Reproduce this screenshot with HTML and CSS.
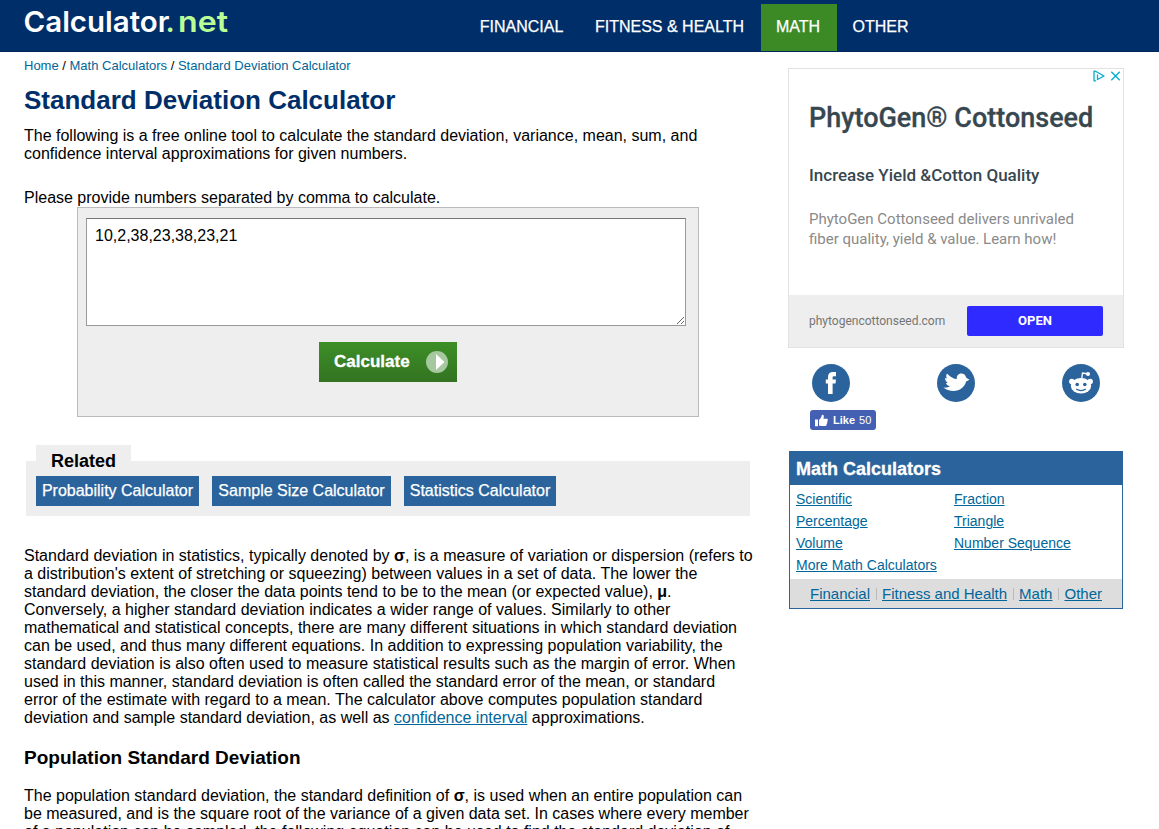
FILE: index.html
```html
<!DOCTYPE html>
<html lang="en">
<head>
<meta charset="utf-8">
<title>Standard Deviation Calculator</title>
<link rel="stylesheet" href="styles.css">
</head>
<body>
<header class="header">
  <svg class="logo" width="210" height="40" viewBox="0 0 210 40">
    <text x="-0.500" y="31.500" textLength="146" lengthAdjust="spacingAndGlyphs" class="logo-main">Calculator</text>
    <text x="141.500" y="31.500" class="logo-net">.</text>
    <text x="154" y="31.500" textLength="50" lengthAdjust="spacingAndGlyphs" class="logo-net">net</text>
  </svg>
  <nav class="nav">
    <a class="w1"><span>FINANCIAL</span></a><a class="w2"><span>FITNESS &amp; HEALTH</span></a><a class="w3 on"><span>MATH</span></a><a class="w4"><span>OTHER</span></a>
  </nav>
</header>
<div class="page">
  <main class="content">
    <div class="crumbs"><a>Home</a> / <a>Math Calculators</a> / <a>Standard Deviation Calculator</a></div>
    <h1>Standard Deviation Calculator</h1>
    <p class="intro">The following is a free online tool to calculate the standard deviation, variance, mean, sum, and<br>confidence interval approximations for given numbers.</p>
    <p class="prompt">Please provide numbers separated by comma to calculate.</p>
    <form class="panel">
      <textarea>10,2,38,23,38,23,21</textarea>
      <button type="button" class="calc"><span>Calculate</span>
        <svg width="22" height="22" viewBox="0 0 22 22"><circle cx="11" cy="11" r="11" fill="#a6c89f"/><path d="M10 3 18.500 11 10 19z" fill="#fff"/></svg>
      </button>
    </form>
    <section class="related">
      <div class="related-tab">Related</div>
      <div class="related-body"><a class="r1">Probability Calculator</a><a class="r2">Sample Size Calculator</a><a class="r3">Statistics Calculator</a></div>
    </section>
    <p class="article">Standard deviation in statistics, typically denoted by <b>σ</b>, is a measure of variation or dispersion (refers to<br>a distribution's extent of stretching or squeezing) between values in a set of data. The lower the<br>standard deviation, the closer the data points tend to be to the mean (or expected value), <b>μ</b>.<br>Conversely, a higher standard deviation indicates a wider range of values. Similarly to other<br>mathematical and statistical concepts, there are many different situations in which standard deviation<br>can be used, and thus many different equations. In addition to expressing population variability, the<br>standard deviation is also often used to measure statistical results such as the margin of error. When<br>used in this manner, standard deviation is often called the standard error of the mean, or standard<br>error of the estimate with regard to a mean. The calculator above computes population standard<br>deviation and sample standard deviation, as well as <a>confidence interval</a> approximations.</p>
    <h2>Population Standard Deviation</h2>
    <p class="article">The population standard deviation, the standard definition of <b>σ</b>, is used when an entire population can<br>be measured, and is the square root of the variance of a given data set. In cases where every member<br>of a population can be sampled, the following equation can be used to find the standard deviation of</p>
  </main>
  <aside class="side">
    <div class="ad">
      <div class="ad-marks">
        <svg width="28" height="12" viewBox="0 0 28 12" fill="none" stroke="#00aecd" stroke-width="1.300"><path d="M3.200 10.800H1V1.200h1.500L11 6 4.500 9.500V4.500" stroke-linejoin="round"/><path d="M18.300 1.800l8.400 8.400M26.700 1.800l-8.400 8.400"/></svg>
      </div>
      <div class="ad-title">PhytoGen® Cottonseed</div>
      <div class="ad-sub">Increase Yield &amp;Cotton Quality</div>
      <div class="ad-text">PhytoGen Cottonseed delivers unrivaled<br>fiber quality, yield &amp; value. Learn how!</div>
      <div class="ad-foot"><span>phytogencottonseed.com</span><a class="open">OPEN</a></div>
    </div>
    <div class="social">
      <svg width="38" height="38" viewBox="0 0 38 38"><circle cx="19" cy="19" r="19" fill="#2b649c"/><path d="M16 30V19.500h-2.200v-4H16v-2.800C16 9.700 17.800 8 21 8h3v4.300h-2c-1 0-1.400.4-1.400 1.300v1.900H24l-.5 4h-2.900V30z" fill="#fff"/></svg>
      <svg width="38" height="38" viewBox="0 0 38 38"><circle cx="19" cy="19" r="19" fill="#2b649c"/><path d="M6.500 23.500c2.600.4 4.800-.1 6.500-1.300-2.100-.4-3.400-1.600-4-3.300h1.700C9 17.500 7.800 15.500 8.200 13.700c.7.4 1.300.6 1.900.6-1.300-1.300-1-3-.1-4.800 2.500 2.800 6.500 5.500 9.800 5.500-.4-3.300 1.600-5.600 4.400-5.600 1.500 0 2.800.5 3.700 1.500l1.600 3 3 1.800-3.400 1.800C27.800 22.800 22.800 27 16.500 27c-3.800 0-7.500-1.200-10-3.500z" fill="#fff"/></svg>
      <svg width="38" height="38" viewBox="0 0 38 38"><circle cx="19" cy="19" r="19" fill="#2b649c"/><path d="M19.700 15 20.500 9l6 1" fill="none" stroke="#fff" stroke-width="1.300"/><circle cx="26" cy="10" r="2" fill="#fff"/><circle cx="9.800" cy="17.400" r="2.700" fill="#fff"/><circle cx="28.200" cy="17.400" r="2.700" fill="#fff"/><ellipse cx="19" cy="21.700" rx="10.200" ry="7.800" fill="#fff"/><circle cx="15.200" cy="20.500" r="1.800" fill="#2b649c"/><circle cx="22.800" cy="20.500" r="1.800" fill="#2b649c"/><path d="M14.200 25q4.800 3.200 9.600 0" fill="none" stroke="#2b649c" stroke-width="1.300"/></svg>
    </div>
    <div class="like"><svg width="13" height="13" viewBox="0 0 13 13" fill="#fff"><path d="M0 5.500h3V12.300H0zM4 6l2-2.300C6.500 3 6.500 1.500 7 .7 8.500.4 9 1.500 8.800 3L8.400 4.800h3.300c1.300 0 1.500 1.400.6 1.900.6.700.4 1.500-.3 1.800.4.8.1 1.500-.5 1.700.2 1.100-.3 1.700-1.500 1.700H6L4 11.400z"/></svg><b>Like</b><span>50</span></div>
    <section class="mathbox">
      <h3>Math Calculators</h3>
      <div class="links"><a>Scientific</a><a>Fraction</a><a>Percentage</a><a>Triangle</a><a>Volume</a><a>Number Sequence</a><a class="more">More Math Calculators</a></div>
      <div class="cats"><a>Financial</a><i></i><a>Fitness and Health</a><i></i><a>Math</a><i></i><a>Other</a></div>
    </section>
  </aside>
</div>
</body>
</html>
```
FILE: styles.css
```css
* { box-sizing: border-box; }
html, body { height: 829px; overflow: hidden; }
body { margin: 0; background: #fff; color: #000; font: 16px/18px "Liberation Sans", Arial, sans-serif; }
p, h1, h2, h3 { margin: 0; }
.header { height: 52px; background: #002e69; border-bottom: 1px solid #00265a; display: flex; padding-left: 24px; }
.logo { flex: none; }
.logo text { font-family: Inter, sans-serif; font-size: 29px; font-weight: 600; }
.logo-main { fill: #fff; }
.logo-net { fill: #b9ff96; }
.nav { display: flex; height: 47px; margin: 4px 0 0 231px; color: #fff; line-height: 45px; -webkit-text-stroke: 0.25px #fff; }
.nav a { text-align: center; white-space: nowrap; }
.w1 { width: 113px; }
.w2 { width: 183px; }
.w3 { width: 76px; }
.w4 { width: 87px; }
.nav .w3 { padding-right: 2px; }
.on { background: #3b8a26; }
.page { display: flex; }
.content { width: 728px; margin-left: 24px; flex: none; white-space: nowrap; }
.crumbs { font-size: 13px; line-height: 16px; margin-top: 6px; }
a { color: inherit; }
.crumbs a, .article a, .links a, .cats a { color: #069; }
h1 { font-size: 26px; line-height: 30px; color: #002e69; margin-top: 11px; }
.intro { margin-top: 12px; }
.prompt { margin-top: 26px; }
.panel { margin-left: 53px; width: 622px; height: 210px; background: #eee; border: 1px solid #bbb; padding: 10px 8px; }
textarea { display: block; width: 600px; height: 108px; border: 1px solid #999; border-top-color: #777; padding: 8px; background: #fff; font: 16px/18px "Liberation Sans", Arial, sans-serif; color: #000; outline: 0; }
.calc { display: flex; align-items: center; justify-content: space-between; width: 138px; height: 40px; margin: 16px 0 0 233px; padding: 0 9px 0 15px; border: 0; background: linear-gradient(#3d8e27, #337321); color: #fff; font: bold 17px "Liberation Sans", Arial, sans-serif; -webkit-text-stroke: 0.3px #fff; }
.related { margin: 28px 0 0 2px; width: 724px; }
.related-tab { margin-left: 10px; width: 95px; height: 16px; background: #eee; font-weight: bold; font-size: 18px; line-height: 32px; padding-left: 15px; position: relative; }
.related-body { background: #eee; height: 55px; padding: 15px 10px; display: flex; gap: 13px; }
.related-body a { background: #2b649c; color: #fff; height: 30px; line-height: 30px; text-align: center; -webkit-text-stroke: 0.25px #fff; }
.r1 { width: 163px; }
.r2 { width: 179px; }
.r3 { width: 152px; }
.article { margin-top: 31px; }
.article a, .links a, .cats a { text-decoration: underline; }
h2 { font-size: 19px; line-height: 22px; margin-top: 20px; }
h2 + .article { margin-top: 18px; }
.side { width: 336px; margin: 16px 0 0 36px; white-space: nowrap; flex: none; }
.ad { height: 280px; border: 1px solid #e2e2e2; font-family: Roboto, sans-serif; display: flex; flex-direction: column; }
.ad-marks { display: flex; justify-content: flex-end; padding: 1px 2px 0 0; height: 14px; }
.ad-title { margin: 17px 0 0 20px; font-size: 27px; line-height: 36px; font-weight: 500; color: #37474f; -webkit-text-stroke: 0.3px #37474f; }
.ad-sub { margin: 29px 0 0 20px; font-size: 17px; line-height: 20px; font-weight: 500; color: #37474f; }
.ad-text { margin: 24px 0 0 20px; font-size: 15px; line-height: 20px; color: #8a8a8a; }
.ad-foot { margin-top: auto; height: 52px; background: #eee; display: flex; align-items: center; justify-content: space-between; padding: 0 20px; font-size: 12px; color: #757575; }
.open { width: 136px; height: 30px; background: #2f2aff; border-radius: 2px; color: #fff; font-weight: 700; font-size: 13px; line-height: 30px; text-align: center; }
.social { display: flex; justify-content: space-between; padding: 0 24px; margin-top: 16px; height: 38px; }
.like { margin: 8px 0 0 22px; width: 66px; height: 20px; border-radius: 3px; background: #4460b2; color: #fff; display: flex; align-items: center; font-size: 11px; padding-left: 5px; }
.like b { margin: 0 4px 0 5px; }
.mathbox { margin: 21px 0 0 1px; width: 334px; height: 158px; border: 1px solid #2b649c; }
.mathbox h3 { height: 33px; background: #2b649c; color: #fff; font-size: 18px; line-height: 34px; padding-left: 6px; -webkit-text-stroke: 0.3px #fff; }
.links { display: grid; grid-template-columns: 158px 1fr; grid-auto-rows: 22px; padding: 4px 6px 3px; line-height: 21px; font-size: 14px; height: 94px; }
.more { grid-column: span 2; }
.cats { background: #ddd; height: 29px; display: flex; align-items: center; justify-content: center; font-size: 15px; }
.cats i { width: 1px; height: 12px; margin: 0 5.5px; background: #bbb; }
```
